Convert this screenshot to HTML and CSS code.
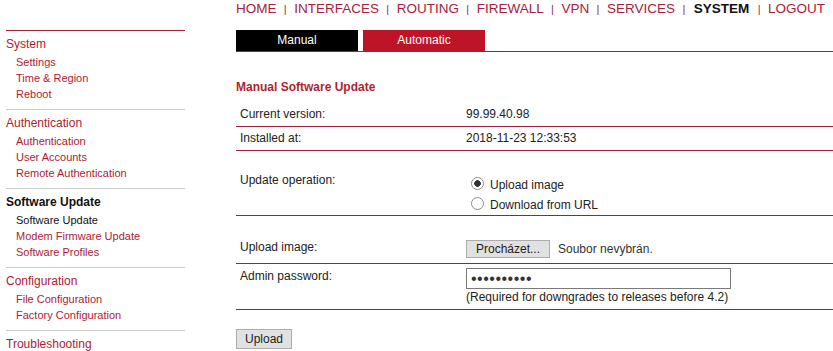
FILE: index.html
```html
<!DOCTYPE html>
<html lang="en">
<head>
<meta charset="utf-8">
<title>Software Update</title>
<link rel="stylesheet" href="styles.css">
</head>
<body>
<div class="page">
  <aside class="side">
    <section class="sec sec-first">
      <a class="sec-title">System</a>
      <a class="sub">Settings</a>
      <a class="sub">Time &amp; Region</a>
      <a class="sub">Reboot</a>
    </section>
    <section class="sec">
      <a class="sec-title">Authentication</a>
      <a class="sub">Authentication</a>
      <a class="sub">User Accounts</a>
      <a class="sub">Remote Authentication</a>
    </section>
    <section class="sec">
      <a class="sec-title sec-title-active">Software Update</a>
      <a class="sub sub-active">Software Update</a>
      <a class="sub">Modem Firmware Update</a>
      <a class="sub">Software Profiles</a>
    </section>
    <section class="sec">
      <a class="sec-title">Configuration</a>
      <a class="sub">File Configuration</a>
      <a class="sub">Factory Configuration</a>
    </section>
    <section class="sec">
      <a class="sec-title">Troubleshooting</a>
    </section>
  </aside>
  <main class="main">
    <nav class="topnav">
      <a class="nav-link">HOME</a><span class="sep">|</span><a class="nav-link">INTERFACES</a><span class="sep">|</span><a class="nav-link">ROUTING</a><span class="sep">|</span><a class="nav-link">FIREWALL</a><span class="sep">|</span><a class="nav-link">VPN</a><span class="sep">|</span><a class="nav-link">SERVICES</a><span class="sep">|</span><a class="nav-link nav-active">SYSTEM</a><span class="sep">|</span><a class="nav-link">LOGOUT</a>
    </nav>
    <div class="tabs">
      <a class="tab tab-active">Manual</a>
      <a class="tab">Automatic</a>
    </div>
    <h2 class="title">Manual Software Update</h2>
    <div class="form">
      <div class="row">
        <div class="lbl">Current version:</div>
        <div class="val">99.99.40.98</div>
      </div>
      <div class="row">
        <div class="lbl">Installed at:</div>
        <div class="val">2018-11-23 12:33:53</div>
      </div>
      <div class="row row-op">
        <div class="lbl lbl-op">Update operation:</div>
        <div class="val val-op">
          <label class="opt"><input class="radio" type="radio" name="op" checked><span>Upload image</span></label>
          <label class="opt"><input class="radio" type="radio" name="op"><span>Download from URL</span></label>
        </div>
      </div>
      <div class="row row-file">
        <div class="lbl lbl-file">Upload image:</div>
        <div class="val val-file">
          <button class="btn-file" type="button">Procházet...</button>
          <span class="file-name">Soubor nevybrán.</span>
        </div>
      </div>
      <div class="row row-pass">
        <div class="lbl lbl-pass">Admin password:</div>
        <div class="val">
          <input class="pass" type="password" value="abcdefghij">
          <div class="note">(Required for downgrades to releases before 4.2)</div>
        </div>
      </div>
    </div>
    <button class="btn-upload" type="button">Upload</button>
  </main>
</div>
</body>
</html>
```

FILE: styles.css
```css
html, body {
  margin: 0;
  padding: 0;
  background: #ffffff;
  font-family: "Liberation Sans", Arial, sans-serif;
  color: #222222;
  overflow: hidden;
}

.page {
  display: grid;
  grid-template-columns: 185px 1fr;
  column-gap: 51px;
}

/* Sidebar */
.side {
  padding: 30px 0 0 6px;
}

.sec {
  border-top: 1px solid #cccccc;
  padding: 4px 0 7px;
}

.sec-first {
  border-top-color: #a3203a;
}

.sec-title {
  display: block;
  font-size: 12px;
  line-height: 19px;
  color: #ad1c33;
}

.sec-title-active {
  font-weight: bold;
  color: #111111;
}

.sub {
  display: block;
  font-size: 11px;
  line-height: 16px;
  padding-left: 10px;
  color: #ad1c33;
}

.sub-active {
  color: #111111;
}

/* Main */
.main {
  min-width: 0;
}

.topnav {
  font-size: 13.5px;
  line-height: 17px;
  white-space: nowrap;
}

.nav-link {
  color: #a6213b;
}

.nav-active {
  font-weight: bold;
  color: #111111;
  margin: 0 1px;
}

.sep {
  font-size: 11px;
  margin: 0 7.6px 0 7.3px;
  color: #8a3046;
}

.tabs {
  display: flex;
  gap: 5px;
  margin-top: 12px;
  border-bottom: 1px solid #9c1f3f;
}

.tab {
  display: block;
  width: 122px;
  height: 21px;
  line-height: 20px;
  text-align: center;
  font-size: 12px;
  color: #ffffff;
  background: #be1428;
}

.tab-active {
  background: #000000;
}

.title {
  margin: 28px 0 9px;
  font-size: 12px;
  line-height: 14px;
  font-weight: bold;
  color: #b01f30;
}

.row {
  display: flex;
  border-bottom: 1px solid #9c1f3f;
  padding: 4px 0 5px;
  font-size: 12px;
  line-height: 14px;
}

.lbl {
  width: 226px;
  padding-left: 4px;
  flex: none;
}

.val {
  flex: 1;
}

.row-op {
  padding: 20px 0 0;
}

.lbl-op {
  padding-top: 2px;
}

.val-op {
  padding-top: 4px;
}

.opt {
  display: flex;
  align-items: center;
  height: 20px;
  line-height: 20px;
}

.radio {
  -webkit-appearance: none;
  appearance: none;
  flex: none;
  width: 13px;
  height: 13px;
  margin: -3px 6px 0 5px;
  box-sizing: border-box;
  border: 1px solid #8a8a8a;
  border-radius: 50%;
  background: #ffffff;
}

.radio:checked {
  background: radial-gradient(circle, #333333 0, #333333 3px, #ffffff 3.6px);
}

.row-file {
  padding: 20px 0 5px;
}

.lbl-file {
  padding-top: 4px;
}

.val-file {
  display: flex;
  align-items: center;
  gap: 8px;
  padding-top: 4px;
}

.btn-file {
  width: 84px;
  height: 18px;
  padding: 0;
  box-sizing: border-box;
  border: 1px solid #adadad;
  background: #e1e1e1;
  font-family: "Liberation Sans", Arial, sans-serif;
  font-size: 12px;
  color: #222222;
}

.file-name {
  color: #333333;
}

.row-pass {
  padding: 4px 0 5px;
}

.lbl-pass {
  padding-top: 1px;
}

.pass {
  display: block;
  width: 265px;
  height: 21px;
  box-sizing: border-box;
  margin: 0;
  padding: 0 4px;
  border: 1px solid #7a7a7a;
  font-family: "Liberation Sans", Arial, sans-serif;
  font-size: 16px;
  letter-spacing: 0.5px;
  color: #333333;
}

.note {
  margin-top: 1px;
}

.btn-upload {
  display: block;
  margin-top: 19px;
  width: 56px;
  height: 20px;
  padding: 0;
  box-sizing: border-box;
  border: 1px solid #adadad;
  background: #e1e1e1;
  font-family: "Liberation Sans", Arial, sans-serif;
  font-size: 12px;
  color: #222222;
}
```
